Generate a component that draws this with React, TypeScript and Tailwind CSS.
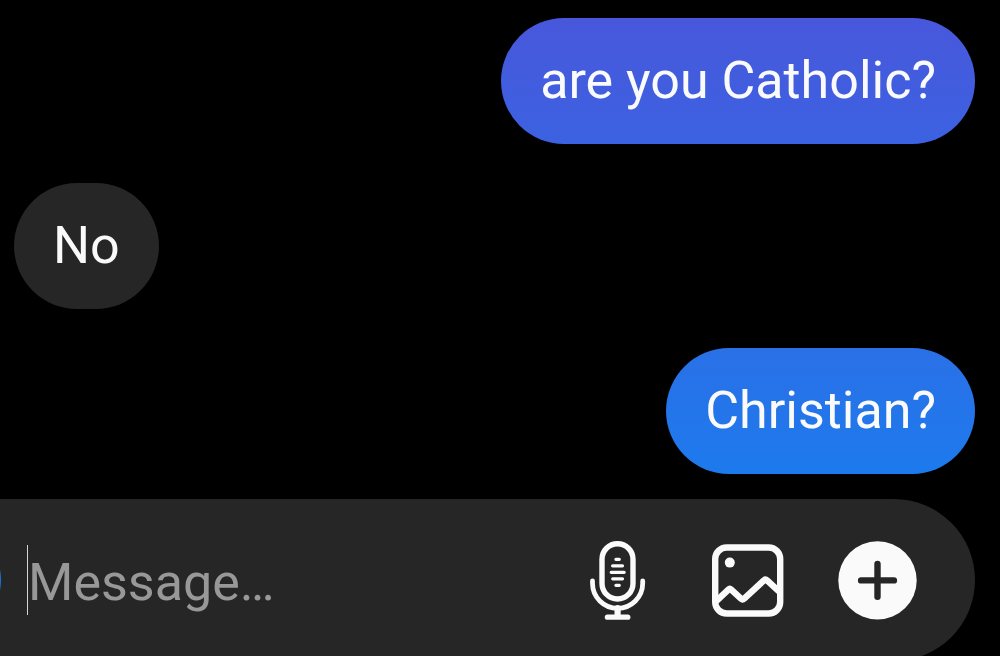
import type { ReactNode } from "react"

type Message = {
  text: string
  mine: boolean
  color: string
}

const messages: Message[] = [
  { text: "are you Catholic?", mine: true, color: "bg-linear-to-b from-[#4857dc] to-[#3b62e1]" },
  { text: "No", mine: false, color: "bg-[#262626]" },
  { text: "Christian?", mine: true, color: "bg-linear-to-b from-[#2a70e7] to-[#1c7aed]" },
]

function MicIcon() {
  return (
    <svg viewBox="0 0 80 80" className="size-20" fill="none" stroke="currentColor" strokeLinecap="round">
      <rect x="25" y="3.7" width="31" height="55.3" rx="15.5" strokeWidth="5.4" />
      <path d="M15.5 41v2.2a25.1 25.1 0 0 0 50.2 0V41" strokeWidth="4.8" />
      <path d="M40.6 68v8" strokeWidth="6.2" />
      <path d="M30.4 77.2h20.4" strokeWidth="5.2" />
      <path
        d="M38.9 19.3h3.4M35.6 25.8h9.9M34.2 32.3h13M35.7 38.8h9.8M38.9 45.3h3.4"
        strokeWidth="3.2"
      />
    </svg>
  )
}

function PhotoIcon() {
  return (
    <svg viewBox="0 0 80 80" className="size-20" fill="none" stroke="currentColor" strokeLinejoin="round">
      <rect x="8.2" y="7.5" width="65" height="66" rx="11.5" strokeWidth="6.4" />
      <circle cx="22.8" cy="22.6" r="5" fill="currentColor" stroke="none" />
      <path
        d="M9.5 60.8 21.4 49.6Q22.8 48.3 24.2 49.6L34 58.6Q35.6 60 37.2 58.6L56.9 40.4Q58.5 39 60.1 40.4L72 51.4"
        strokeWidth="6.4"
      />
    </svg>
  )
}

function PlusIcon() {
  return (
    <svg viewBox="0 0 80 80" className="size-20">
      <circle cx="40.5" cy="40.4" r="39.2" fill="currentColor" />
      <path d="M40.5 24v32.8M24.1 40.4h32.8" stroke="#262626" strokeWidth="6.4" strokeLinecap="round" />
    </svg>
  )
}

function IconButton({ label, children }: { label: string; children: ReactNode }) {
  return (
    <button type="button" aria-label={label} className="shrink-0">
      {children}
    </button>
  )
}

export default function App() {
  return (
    <div className="h-screen overflow-hidden bg-black text-[52px] leading-[62px] text-[#fafafa] font-['Roboto','Liberation_Sans',sans-serif]">

      {/* MESSAGES */}
      <main className="flex flex-col gap-[39px] pt-[18px] pl-[14px] pr-[25px]">
        {messages.map((m) => (
          <p
            key={m.text}
            className={`rounded-[63px] px-[39px] py-8 ${m.mine ? "self-end" : "self-start"} ${m.color}`}
          >
            {m.text}
          </p>
        ))}
      </main>

      {/* COMPOSER */}
      <form className="mt-[25px] mr-[25px] flex h-[162px] items-center rounded-r-full bg-[#262626] pr-[58px]">
        <button type="button" aria-label="Camera" className="-ml-[115px] size-[116px] shrink-0 rounded-full bg-[#1877d8]" />

        <input
          type="text"
          aria-label="Message"
          placeholder="Message…"
          className="ml-[26px] h-[70px] min-w-0 flex-1 border-l border-[#d4d4d4] pt-1 outline-none placeholder:text-[#989898]"
        />

        <div className="flex gap-[50px]">
          <IconButton label="Voice message">
            <MicIcon />
          </IconButton>
          <IconButton label="Photo">
            <PhotoIcon />
          </IconButton>
          <IconButton label="More">
            <PlusIcon />
          </IconButton>
        </div>
      </form>

    </div>
  )
}
